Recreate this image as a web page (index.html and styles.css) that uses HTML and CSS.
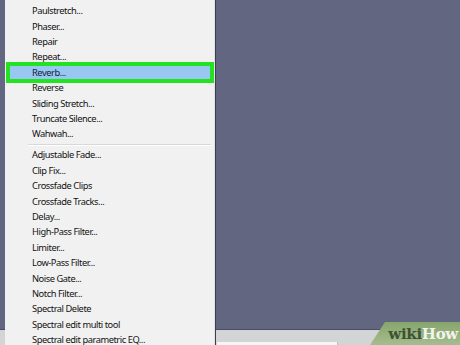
FILE: index.html
```html
<!DOCTYPE html>
<html>
<head>
<meta charset="utf-8">
<link rel="stylesheet" href="styles.css">
</head>
<body>
<div class="desk">
  <div class="workspace"></div>
  <div class="statusbar"><div class="status-field"></div></div>
</div>
<div class="menu">
  <div class="item">Paulstretch...</div>
  <div class="item">Phaser...</div>
  <div class="item">Repair</div>
  <div class="item">Repeat...</div>
  <div class="item active">Reverb...</div>
  <div class="item">Reverse</div>
  <div class="item">Sliding Stretch...</div>
  <div class="item">Truncate Silence...</div>
  <div class="item">Wahwah...</div>
  <div class="sep"></div>
  <div class="item">Adjustable Fade...</div>
  <div class="item">Clip Fix...</div>
  <div class="item">Crossfade Clips</div>
  <div class="item">Crossfade Tracks...</div>
  <div class="item">Delay...</div>
  <div class="item">High-Pass Filter...</div>
  <div class="item">Limiter...</div>
  <div class="item">Low-Pass Filter...</div>
  <div class="item">Noise Gate...</div>
  <div class="item">Notch Filter...</div>
  <div class="item">Spectral Delete</div>
  <div class="item">Spectral edit multi tool</div>
  <div class="item">Spectral edit parametric EQ...</div>
</div>
<div class="logo"><span class="wiki">wiki</span><span class="how">How</span></div>
</body>
</html>
```
FILE: styles.css
```css
html, body {
  margin: 0;
  padding: 0;
}
body {
  width: 460px;
  height: 345px;
  overflow: hidden;
  position: relative;
  background: #626680;
  font-family: "Noto Sans", "Open Sans", sans-serif;
}
.desk {
  display: flex;
  flex-direction: column;
  height: 345px;
}
.workspace {
  flex: 1;
  background: #626680;
  border-bottom: 1px solid #4b4e63;
}
.statusbar {
  height: 15px;
  background: #d3d4d6;
  display: flex;
  align-items: flex-end;
}
.status-field {
  margin-left: 217px;
  width: 120px;
  height: 3px;
  background: #f6f6f6;
  border-right: 1px solid #bdbdbd;
}
.menu {
  position: absolute;
  left: 5px;
  top: 0;
  width: 210px;
  height: 345px;
  background: #f1f1f1;
  border-right: 1px solid #e3e3e3;
  box-shadow: 1px 0 0 #3b3e4e;
  padding-top: 3.3px;
  box-sizing: border-box;
  font-size: 9.3px;
  letter-spacing: -0.45px;
  color: #111111;
}
.item {
  height: 15.4px;
  line-height: 15.4px;
  padding-left: 27px;
  white-space: nowrap;
}
.item.active {
  margin: 1px 4px 1px 5px;
  height: 13.4px;
  line-height: 13.4px;
  padding-left: 22px;
  background: #98c8f2;
  color: #102040;
  outline: 4.5px solid #22e222;
}
.sep {
  height: 1px;
  margin: 2px 3px 1.6px 23px;
  background: #d8d8d8;
  border-bottom: 1px solid #ffffff;
}
.logo {
  position: absolute;
  right: 0;
  bottom: 0;
  width: 78px;
  height: 23px;
  padding-left: 10px;
  background: linear-gradient(#86a56c, #a6bc90);
  clip-path: polygon(15px 0, 100% 0, 100% 100%, 0 100%);
  font-family: "DejaVu Serif", "Liberation Serif", serif;
  font-weight: bold;
  font-size: 15px;
  line-height: 25px;
  letter-spacing: -0.3px;
  box-sizing: content-box;
  text-align: right;
  padding-right: 2px;
}
.wiki { color: #3f5232; }
.how { color: #f1f4ec; }
```
